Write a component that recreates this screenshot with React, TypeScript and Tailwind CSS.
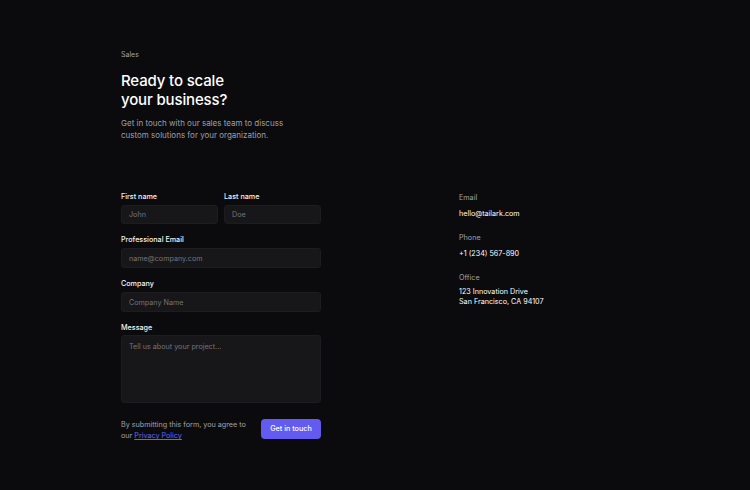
export default function App() {
  return (
    <div className="min-h-[490px] w-full bg-[#0b0b0e] font-['Inter',sans-serif] text-white">
      <div className="mx-auto w-[508px] pt-[50px]">
        {/* intro */}
        <p className="text-[7px] leading-[10px] text-[#a1a1aa]">Sales</p>
        <h1 className="mt-[11px] text-[15px] font-medium leading-[19px] tracking-[-0.01em]">
          Ready to scale
          <br />
          your business?
        </h1>
        <p className="mt-[8px] w-[180px] text-[8px] leading-[12px] text-[#9f9fa8]">
          Get in touch with our sales team to discuss custom solutions for your organization.
        </p>

        <div className="mt-[51px] flex justify-between">
          <form className="w-[200px]">
            <div className="flex gap-[6px]">
              <div className="flex-1">
                <label className="block text-[7.2px] font-medium leading-[10px] text-[#f4f4f5]">First name</label>
                <input
                  placeholder="John"
                  className="mt-[3px] block h-[19px] w-full rounded-[3px] border border-[#1c1c21] bg-[#17171a] px-[7px] text-[7.2px] text-white placeholder:text-[#74747c] outline-none"
                />
              </div>
              <div className="flex-1">
                <label className="block text-[7.2px] font-medium leading-[10px] text-[#f4f4f5]">Last name</label>
                <input
                  placeholder="Doe"
                  className="mt-[3px] block h-[19px] w-full rounded-[3px] border border-[#1c1c21] bg-[#17171a] px-[7px] text-[7.2px] text-white placeholder:text-[#74747c] outline-none"
                />
              </div>
            </div>

            <div className="mt-[11px]">
              <label className="block text-[7.2px] font-medium leading-[10px] text-[#f4f4f5]">Professional Email</label>
              <input
                placeholder="name@company.com"
                className="mt-[3px] block h-[20px] w-full rounded-[3px] border border-[#1c1c21] bg-[#17171a] px-[7px] text-[7.2px] text-white placeholder:text-[#74747c] outline-none"
              />
            </div>

            <div className="mt-[11px]">
              <label className="block text-[7.2px] font-medium leading-[10px] text-[#f4f4f5]">Company</label>
              <input
                placeholder="Company Name"
                className="mt-[3px] block h-[20px] w-full rounded-[3px] border border-[#1c1c21] bg-[#17171a] px-[7px] text-[7.2px] text-white placeholder:text-[#74747c] outline-none"
              />
            </div>

            <div className="mt-[11px]">
              <label className="block text-[7.2px] font-medium leading-[10px] text-[#f4f4f5]">Message</label>
              <textarea
                placeholder="Tell us about your project..."
                className="mt-[2px] block h-[68px] w-full resize-none rounded-[3px] border border-[#1c1c21] bg-[#17171a] px-[7px] py-[6px] text-[7.2px] text-white placeholder:text-[#74747c] outline-none"
              />
            </div>

            <div className="mt-[16px] flex items-start justify-between">
              <p className="w-[135px] text-[7.2px] leading-[11px] text-[#a1a1aa]">
                By submitting this form, you agree to our{" "}
                <a href="#" className="text-[#6366f1] underline">
                  Privacy Policy
                </a>
              </p>
              <button
                type="button"
                className="h-[20px] w-[60px] rounded-[4px] bg-[#635bf0] text-[7.2px] font-medium text-white"
              >
                Get in touch
              </button>
            </div>
          </form>

          <div className="w-[170px] pt-[1px]">
            <p className="text-[7.2px] leading-[10px] text-[#a1a1aa]">Email</p>
            <p className="mt-[6px] text-[7.2px] leading-[10px]">hello@tailark.com</p>
            <p className="mt-[14px] text-[7.2px] leading-[10px] text-[#a1a1aa]">Phone</p>
            <p className="mt-[6px] text-[7.2px] leading-[10px]">+1 (234) 567-890</p>
            <p className="mt-[14px] text-[7.2px] leading-[10px] text-[#a1a1aa]">Office</p>
            <p className="mt-[4px] text-[7.2px] leading-[10px]">
              123 Innovation Drive
              <br />
              San Francisco, CA 94107
            </p>
          </div>
        </div>
      </div>
    </div>
  );
}
